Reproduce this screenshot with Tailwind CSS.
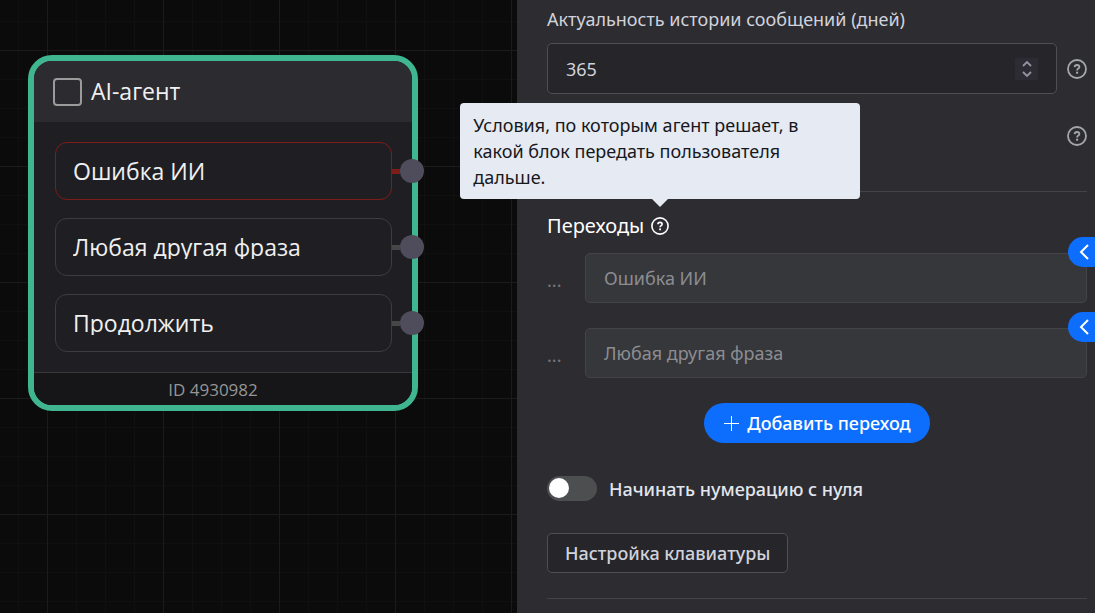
<!DOCTYPE html>
<html lang="ru">

<head>
    <meta charset="UTF-8">
    <meta name="viewport" content="width=device-width, initial-scale=1.0">
    <title>AI-агент</title>
    <script src="https://cdn.jsdelivr.net/npm/@tailwindcss/browser@4"></script>
</head>

<body class="flex min-h-screen overflow-hidden bg-[#0b0b0b] font-['Noto_Sans',sans-serif]">
    <svg class="hidden">
        <symbol id="help" viewBox="0 0 20 20" fill="none" stroke="currentColor">
            <circle cx="10" cy="10" r="9" stroke-width="1.8" />
            <path d="M7.6 8.1C7.7 6.7 8.7 6 10 6s2.4.8 2.4 2c0 1.6-2.3 1.6-2.3 3.4" stroke-width="1.8" />
            <path d="M10.1 12.7v2" stroke-width="2.1" />
        </symbol>
    </svg>

    <!-- Canvas -->
    <main class="relative min-w-0 flex-1 overflow-hidden font-['Open_Sans',sans-serif]">
        <svg class="absolute inset-0 h-full w-full" fill="none">
            <defs>
                <pattern id="grid" x="47" y="50" width="116" height="116" patternUnits="userSpaceOnUse">
                    <path d="M29.5 0v116M58.5 0v116M87.5 0v116M0 29.5h116M0 58.5h116M0 87.5h116" stroke="#101010" />
                    <path d="M.5 0v116M0 .5h116" stroke="#1b1b1b" />
                </pattern>
            </defs>
            <rect width="100%" height="100%" fill="url(#grid)" />
        </svg>

        <section class="absolute top-[55px] left-[28px] w-[390px] rounded-[24px] border-6 border-[#3fb68f] bg-[#1f1f23] text-[#f0f0f0]">
            <label class="flex h-[61px] items-center gap-[9px] rounded-t-[18px] bg-[#2c2b30] pl-[19px] text-[23px]">
                <input type="checkbox" class="h-7 w-[29px] appearance-none rounded-[4px] border-2 border-[#9b9b9b]">
                AI-агент
            </label>
            <ul class="flex flex-col gap-[18px] px-[21px] py-5 text-[23px]">
                <li class="flex">
                    <div class="h-[58px] w-[337px] shrink-0 rounded-xl border border-[#7d1c19] px-[17px] py-4">
                        <p class="h-6 overflow-hidden leading-6">Ошибка ИИ</p>
                    </div>
                    <div class="flex shrink-0 items-center">
                        <span class="h-[5px] w-2 bg-[#7d1c19]"></span>
                        <span class="size-6 rounded-full bg-[#4f4d5b]"></span>
                    </div>
                </li>
                <li class="flex">
                    <div class="h-[58px] w-[337px] shrink-0 rounded-xl border border-[#3d3d40] px-[17px] py-4">
                        <p class="h-6 overflow-hidden leading-6">Любая другая фраза</p>
                    </div>
                    <div class="flex shrink-0 items-center">
                        <span class="h-[5px] w-2 bg-[#464646]"></span>
                        <span class="size-6 rounded-full bg-[#4f4d5b]"></span>
                    </div>
                </li>
                <li class="flex">
                    <div class="h-[58px] w-[337px] shrink-0 rounded-xl border border-[#3d3d40] px-[17px] py-4">
                        <p class="h-6 overflow-hidden leading-6">Продолжить</p>
                    </div>
                    <div class="flex shrink-0 items-center">
                        <span class="h-[5px] w-2 bg-[#464646]"></span>
                        <span class="size-6 rounded-full bg-[#4f4d5b]"></span>
                    </div>
                </li>
            </ul>
            <footer class="h-[33px] rounded-b-[18px] border-t border-[#39393b] bg-[#161618] pr-5 text-center text-[17px] leading-[34px] text-[#959595]">ID 4930982</footer>
        </section>
    </main>

    <!-- Settings panel -->
    <aside class="relative w-[578px] shrink-0 bg-[#2d2c31] pt-[7px] pr-2 pl-[30px] text-lg text-[#d0d3dc]">
        <label for="history-days" class="mb-3 block leading-6">Актуальность истории сообщений (дней)</label>
        <div class="flex items-center gap-[10px]">
            <div class="flex h-[51px] flex-1 items-center rounded-[5px] border border-[#505054] bg-[#262529] pr-[18px] pl-[18px]">
                <input id="history-days" type="number" value="365"
                    class="min-w-0 flex-1 [appearance:textfield] outline-none">
                <div class="flex h-[22px] w-[23px] flex-col items-center justify-center gap-1 bg-[#2d2b34] text-[#96939f]">
                    <button type="button" aria-label="Увеличить">
                        <svg class="block h-[6px] w-[10px]" viewBox="0 0 10 6" fill="none" stroke="currentColor" stroke-width="1.8"><path d="M1 5l4-4 4 4" /></svg>
                    </button>
                    <button type="button" aria-label="Уменьшить">
                        <svg class="block h-[6px] w-[10px]" viewBox="0 0 10 6" fill="none" stroke="currentColor" stroke-width="1.8"><path d="M1 1l4 4 4-4" /></svg>
                    </button>
                </div>
            </div>
            <svg class="size-5 text-[#a4a6ad]"><use href="#help" /></svg>
        </div>

        <div class="mt-[22px] flex h-10 items-center justify-end">
            <svg class="size-5 text-[#a4a6ad]"><use href="#help" /></svg>
        </div>

        <hr class="mt-[35px] border-[#444448]">

        <div class="mt-5 mb-[13px] flex items-center gap-[7px] text-white">
            <h2 class="text-xl leading-7">Переходы</h2>
            <div class="relative">
                <svg class="block size-[18px]"><use href="#help" /></svg>
                <div role="tooltip"
                    class="absolute bottom-[36px] left-1/2 w-[400px] -translate-x-1/2 rounded-[4px] bg-[#e5eaf3] px-[13px] py-[9px] text-lg leading-[26px] text-[#17181c]">
                    Условия, по которым агент решает, в какой блок передать пользователя дальше.
                    <svg class="absolute top-full left-1/2 h-2 w-4 -translate-x-1/2" viewBox="0 0 16 8" fill="#e5eaf3"><path d="M0 0h16L8 8z" /></svg>
                </div>
            </div>
        </div>

        <div class="flex flex-col gap-[25px]">
            <div class="relative flex items-center">
                <span class="w-[38px] pt-1 text-[#77777b]">...</span>
                <input type="text" value="Ошибка ИИ" disabled aria-label="Переход 1"
                    class="h-[50px] min-w-0 flex-1 rounded-[5px] border border-[#444448] bg-[#36373b] px-[18px] text-[#8c8d91]">
                <button type="button" aria-label="Развернуть" class="absolute -top-4 -right-2 flex h-[30px] w-[27px] items-center rounded-l-full bg-[#0d6efd] pl-[11px] text-white">
                    <svg class="h-4 w-[10px]" viewBox="0 0 10 16" fill="none" stroke="currentColor" stroke-width="2"><path d="M9 1L2 8l7 7" /></svg>
                </button>
            </div>
            <div class="relative flex items-center">
                <span class="w-[38px] pt-1 text-[#77777b]">...</span>
                <input type="text" value="Любая другая фраза" disabled aria-label="Переход 2"
                    class="h-[50px] min-w-0 flex-1 rounded-[5px] border border-[#444448] bg-[#36373b] px-[18px] text-[#8c8d91]">
                <button type="button" aria-label="Развернуть" class="absolute -top-4 -right-2 flex h-[30px] w-[27px] items-center rounded-l-full bg-[#0d6efd] pl-[11px] text-white">
                    <svg class="h-4 w-[10px]" viewBox="0 0 10 16" fill="none" stroke="currentColor" stroke-width="2"><path d="M9 1L2 8l7 7" /></svg>
                </button>
            </div>
        </div>

        <button type="button" class="mx-auto mt-[25px] flex h-10 items-center gap-2 rounded-full bg-[#0d6efd] px-[19px] font-medium text-white">
            <svg class="size-4" viewBox="0 0 16 16" fill="none" stroke="currentColor"><path d="M8.5 1v15M1 8.5h15" /></svg>
            Добавить переход
        </button>

        <label class="mt-[33px] flex h-[25px] items-center gap-3 font-medium text-[#e2e5ee]">
            <input type="checkbox" role="switch"
                class="h-[25px] w-[50px] appearance-none rounded-full bg-[#4d4e4f] p-[2px] before:block before:size-5 before:rounded-full before:bg-white checked:bg-[#0d6efd] checked:before:ml-auto">
            Начинать нумерацию с нуля
        </label>

        <button type="button" class="mt-8 block h-10 rounded-[5px] border border-[#505054] bg-[#262529] px-[17px] font-medium">Настройка клавиатуры</button>

        <hr class="mt-[25px] border-[#444448]">
    </aside>
</body>

</html>
